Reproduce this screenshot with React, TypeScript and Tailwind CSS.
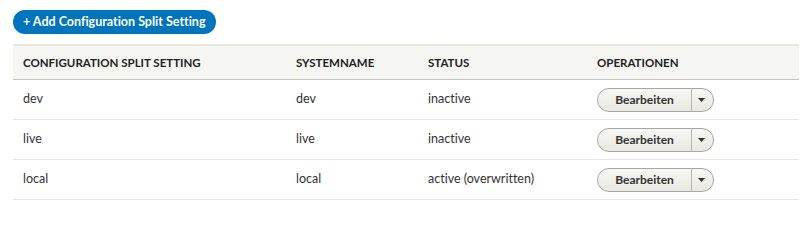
import React from "react";

const rows = [
  { name: "dev", sys: "dev", status: "inactive" },
  { name: "live", sys: "live", status: "inactive" },
  { name: "local", sys: "local", status: "active (overwritten)" },
];

function DropButton() {
  return (
    <div className="flex h-[24px] w-[117px] rounded-full border border-[#a6a6a6] bg-gradient-to-b from-[#f7f7f4] to-[#e9e8e1] text-[#333]">
      <div className="flex w-[93px] items-center justify-center text-[12px] font-bold">Bearbeiten</div>
      <div className="flex flex-1 items-center justify-center border-l border-[#b8b8b2] pr-[2px]">
        <svg width="7" height="4" viewBox="0 0 7 4">
          <path d="M0 0h7L3.5 4z" fill="#333" />
        </svg>
      </div>
    </div>
  );
}

export default function App() {
  return (
    <div
      className="h-[209px] w-[807px] bg-white pl-[13px] pt-[10px] text-[#333] [font-variant-ligatures:none]"
      style={{ fontFamily: 'Lato, "Open Sans", sans-serif' }}
    >
      <button className="flex h-[24px] items-center rounded-full bg-[#0074bd] px-[10px] text-[12.5px] font-bold text-white">
        + Add Configuration Split Setting
      </button>
      <div className="mt-[10px] w-[786px]">
        <div className="flex h-[36px] items-center border-t-2 border-b border-t-[#e7e6e1] border-b-[#c4c3bd] bg-[#f5f5f2] text-[11.5px] font-bold text-[#222]">
          <div className="w-[273px] pl-[10px]">CONFIGURATION SPLIT SETTING</div>
          <div className="w-[132px] pl-[10px]">SYSTEMNAME</div>
          <div className="w-[169px] pl-[10px]">STATUS</div>
          <div className="flex-1 pl-[10px]">OPERATIONEN</div>
        </div>
        {rows.map((r) => (
          <div key={r.name} className="flex h-[40px] items-center border-b border-[#e6e4df] text-[12.5px]">
            <div className="w-[273px] pl-[10px]">{r.name}</div>
            <div className="w-[132px] pl-[10px]">{r.sys}</div>
            <div className="w-[169px] pl-[10px]">{r.status}</div>
            <div className="flex-1 pl-[10px]">
              <DropButton />
            </div>
          </div>
        ))}
      </div>
    </div>
  );
}
